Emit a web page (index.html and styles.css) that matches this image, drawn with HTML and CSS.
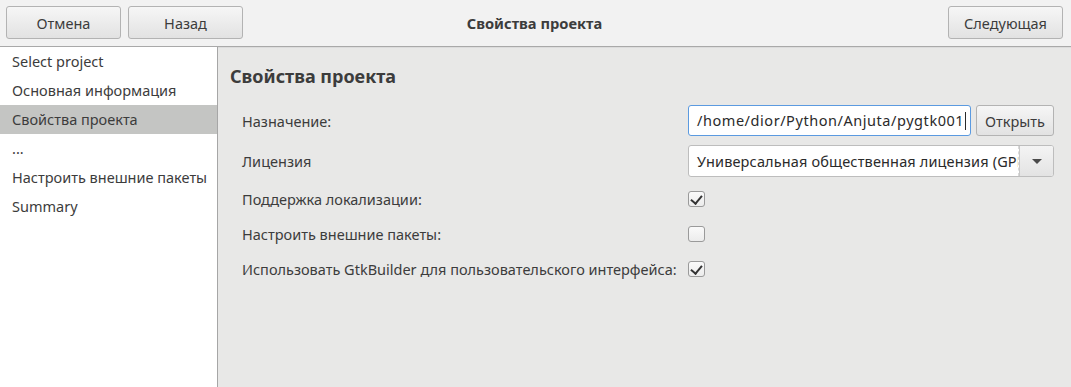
FILE: index.html
```html
<!DOCTYPE html>
<html lang="ru">
<head>
    <meta charset="UTF-8">
    <meta name="viewport" content="width=device-width, initial-scale=1.0">
    <title>Свойства проекта</title>
    <link rel="stylesheet" href="styles.css">
</head>
<body>
    <div class="window">
        <header class="headerbar">
            <div class="header-left">
                <button class="btn btn-head">Отмена</button>
                <button class="btn btn-head">Назад</button>
            </div>
            <h1 class="title">Свойства проекта</h1>
            <div class="header-right">
                <button class="btn btn-head">Следующая</button>
            </div>
        </header>

        <div class="body">
            <nav class="sidebar">
                <div class="step">Select project</div>
                <div class="step">Основная информация</div>
                <div class="step active">Свойства проекта</div>
                <div class="step">...</div>
                <div class="step">Настроить внешние пакеты</div>
                <div class="step">Summary</div>
            </nav>

            <section class="content">
                <h2>Свойства проекта</h2>
                <div class="form">
                    <label class="label">Назначение:</label>
                    <div class="control path">
                        <div class="entry focused">/home/dior/Python/Anjuta/pygtk001<span class="caret"></span></div>
                        <button class="btn btn-open">Открыть</button>
                    </div>

                    <label class="label">Лицензия</label>
                    <div class="control combo">
                        <div class="combo-text">Универсальная общественная лицензия (GPL)</div>
                        <div class="combo-arrow"><span class="triangle"></span></div>
                    </div>

                    <label class="label">Поддержка локализации:</label>
                    <div class="control"><span class="check checked"></span></div>

                    <label class="label">Настроить внешние пакеты:</label>
                    <div class="control"><span class="check"></span></div>

                    <label class="label">Использовать GtkBuilder для пользовательского интерфейса:</label>
                    <div class="control"><span class="check checked"></span></div>
                </div>
            </section>
        </div>
    </div>
</body>
</html>
```

FILE: styles.css
```css
* {
    box-sizing: border-box;
}

body {
    margin: 0;
    font-family: "Noto Sans", "DejaVu Sans", sans-serif;
    font-size: 14.5px;
    color: #3c3c3c;
    background: #e8e8e7;
}

.window {
    display: flex;
    flex-direction: column;
    width: 1071px;
    height: 387px;
}

/* header bar */
.headerbar {
    display: flex;
    align-items: center;
    justify-content: space-between;
    height: 47px;
    padding: 0 8px 1px 6px;
    background: #f2f2f2;
    border-bottom: 1px solid #a9a9a9;
    box-shadow: 0 1px 0 #dcdcdc;
}

.header-left {
    display: flex;
    gap: 7px;
}

.title {
    margin: 0 0 0 -122px;
    font-size: 14.7px;
    font-weight: bold;
    color: #3c3c3c;
}

.btn {
    font-family: inherit;
    font-size: 14.5px;
    color: #3c3c3c;
    background: linear-gradient(#f6f6f6, #e2e2e2);
    border: 1px solid #b3b3b3;
    border-radius: 3px;
    padding: 0;
    cursor: pointer;
}

.btn-head {
    width: 115px;
    height: 33px;
}

/* body */
.body {
    display: flex;
    flex: 1;
}

.sidebar {
    width: 218px;
    background: #ffffff;
    border-right: 1px solid #a6a6a6;
}

.step {
    height: 29px;
    line-height: 29px;
    padding-left: 12px;
    white-space: nowrap;
}

.step.active {
    background: #c4c5c3;
}

.content {
    flex: 1;
    padding: 18px 17px 0 12px;
}

h2 {
    margin: 0 0 18px;
    font-size: 18px;
    line-height: 22px;
    font-weight: bold;
    color: #3c3c3c;
}

.form {
    display: grid;
    grid-template-columns: 446px 1fr;
    grid-template-rows: 31px 32px 26px 26px 26px;
    row-gap: 9px;
    padding-left: 12px;
}

.label {
    display: flex;
    align-items: center;
    white-space: nowrap;
}

.control {
    display: flex;
    align-items: center;
}

.path {
    gap: 5px;
}

.entry {
    width: 283px;
    height: 31px;
    line-height: 29px;
    padding-left: 8px;
    background: #ffffff;
    border: 1px solid #5b9ae0;
    border-radius: 3px;
    color: #2a2a2a;
    letter-spacing: 0.55px;
    white-space: nowrap;
    overflow: hidden;
}

.caret {
    display: inline-block;
    width: 1px;
    height: 18px;
    margin-left: 1px;
    vertical-align: -4px;
    background: #2a2a2a;
}

.btn-open {
    width: 78px;
    height: 31px;
}

.combo {
    height: 32px;
    border: 1px solid #bdbdbd;
    border-radius: 3px;
    background: #ffffff;
    overflow: hidden;
}

.combo-text {
    flex: 1;
    height: 100%;
    line-height: 30px;
    padding-left: 8px;
    white-space: nowrap;
    overflow: hidden;
    color: #2a2a2a;
    letter-spacing: 0.15px;
    border-right: 1px dashed #d8d8d8;
}

.combo-arrow {
    display: flex;
    align-items: center;
    justify-content: center;
    width: 34px;
    height: 100%;
    background: linear-gradient(#f4f4f4, #e3e3e3);
    border-left: 1px solid #c8c8c8;
}

.triangle {
    width: 0;
    height: 0;
    border-left: 5px solid transparent;
    border-right: 5px solid transparent;
    border-top: 5px solid #4a4a4a;
}

.check {
    position: relative;
    display: inline-block;
    width: 17px;
    height: 16px;
    border: 1px solid #9a9a9a;
    border-radius: 3px;
    background: linear-gradient(#fafafa, #ececec);
}

.check.checked::after {
    content: "";
    position: absolute;
    left: 4px;
    top: 1px;
    width: 5px;
    height: 9px;
    border-right: 2.5px solid #333333;
    border-bottom: 2.5px solid #333333;
    transform: rotate(40deg);
}
```
